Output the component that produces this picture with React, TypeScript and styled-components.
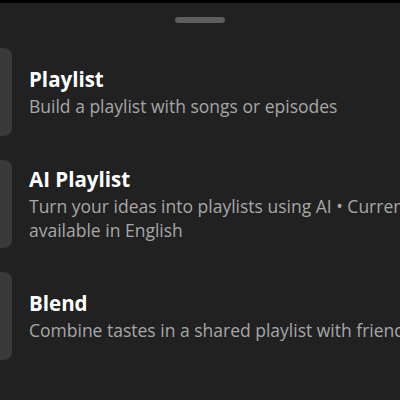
import * as React from 'react';
import styled, { createGlobalStyle } from 'styled-components';

const GlobalStyle = createGlobalStyle`
	html, body {
		margin: 0;
		padding: 0;
		background: #000;
		overflow: hidden;
	}
	body {
		font-family: "Open Sans", "Liberation Sans", sans-serif;
	}
`;

const Sheet = styled.div`
	margin-top: 3px;
	width: 470px;
	height: 397px;
	background: #212121;
	display: flex;
	flex-direction: column;
	align-items: flex-start;
`;

const HandleBar = styled.div`
	align-self: flex-start;
	margin: 14px 0 0 175px;
	width: 50px;
	height: 6px;
	border-radius: 3px;
	background: #5e5e5e;
`;

const OptionList = styled.div`
	display: flex;
	flex-direction: column;
	gap: 24px;
	margin-top: 25px;
`;

const Option = styled.div`
	display: flex;
	align-items: center;
	gap: 17px;
	height: 88px;
`;

const Thumb = styled.div`
	flex: 0 0 88px;
	height: 88px;
	margin-left: -76px;
	border-radius: 8px;
	background: #3a3838;
`;

const Texts = styled.div`
	display: flex;
	flex-direction: column;
	width: 410px;
`;

const Title = styled.div`
	color: #ffffff;
	font-weight: 700;
	font-size: 20.5px;
	line-height: 26px;
`;

const Subtitle = styled.div`
	color: #a7a7a7;
	font-size: 17.5px;
	line-height: 24px;
	margin-top: 2px;
`;

const options = [
	{ title: 'Playlist', subtitle: 'Build a playlist with songs or episodes' },
	{ title: 'AI Playlist', subtitle: 'Turn your ideas into playlists using AI • Currently available in English' },
	{ title: 'Blend', subtitle: 'Combine tastes in a shared playlist with friends' },
];

export default function App() {
	return (
		<>
			<GlobalStyle />
			<Sheet>
				<HandleBar />
				<OptionList>
					{options.map((opt) => (
						<Option key={opt.title}>
							<Thumb />
							<Texts>
								<Title>{opt.title}</Title>
								<Subtitle>{opt.subtitle}</Subtitle>
							</Texts>
						</Option>
					))}
				</OptionList>
			</Sheet>
		</>
	);
}
